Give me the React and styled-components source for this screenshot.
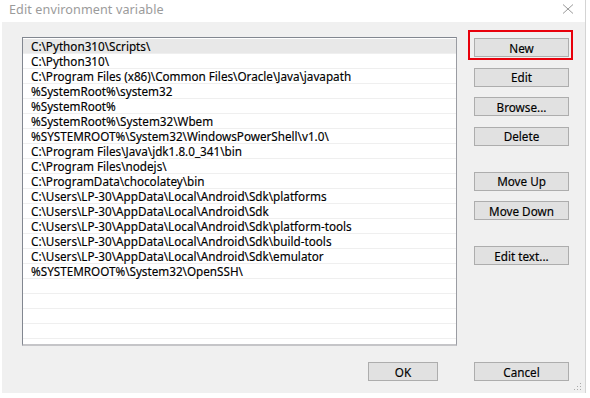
import React from 'react'
import styled, { createGlobalStyle } from 'styled-components'

const paths = [
  'C:\\Python310\\Scripts\\',
  'C:\\Python310\\',
  'C:\\Program Files (x86)\\Common Files\\Oracle\\Java\\javapath',
  '%SystemRoot%\\system32',
  '%SystemRoot%',
  '%SystemRoot%\\System32\\Wbem',
  '%SYSTEMROOT%\\System32\\WindowsPowerShell\\v1.0\\',
  'C:\\Program Files\\Java\\jdk1.8.0_341\\bin',
  'C:\\Program Files\\nodejs\\',
  'C:\\ProgramData\\chocolatey\\bin',
  'C:\\Users\\LP-30\\AppData\\Local\\Android\\Sdk\\platforms',
  'C:\\Users\\LP-30\\AppData\\Local\\Android\\Sdk',
  'C:\\Users\\LP-30\\AppData\\Local\\Android\\Sdk\\platform-tools',
  'C:\\Users\\LP-30\\AppData\\Local\\Android\\Sdk\\build-tools',
  'C:\\Users\\LP-30\\AppData\\Local\\Android\\Sdk\\emulator',
  '%SYSTEMROOT%\\System32\\OpenSSH\\',
]

function App() {
  const rows = [...paths, '', '', '', '', '']
  return (
    <>
      <Global />
      <Window>
        <TitleBar>
          <Title>Edit environment variable</Title>
          <CloseIcon width="12" height="10" viewBox="0 0 12 10">
            <path d="M1 0.5 L11 9.5 M11 0.5 L1 9.5" stroke="#9a9a9a" strokeWidth="1" fill="none" />
          </CloseIcon>
        </TitleBar>
        <Body>
          <MainRow>
            <PathList>
              {rows.map((p, i) => (
                <Row key={i} selected={i === 0}>{p}</Row>
              ))}
            </PathList>
            <SideButtons>
              <Highlight>
                <Button>New</Button>
              </Highlight>
              <Button>Edit</Button>
              <Button>Browse...</Button>
              <Button>Delete</Button>
              <Spacer />
              <Button>Move Up</Button>
              <Button>Move Down</Button>
              <Spacer />
              <Button>Edit text...</Button>
            </SideButtons>
          </MainRow>
          <Footer>
            <Button w="70px">OK</Button>
            <Button>Cancel</Button>
          </Footer>
          <Grip width="8" height="8" viewBox="0 0 8 8">
            <rect x="6" y="0" width="1" height="1" fill="#aaa" />
            <rect x="3" y="3" width="1" height="1" fill="#aaa" />
            <rect x="6" y="3" width="1" height="1" fill="#aaa" />
            <rect x="0" y="6" width="1" height="1" fill="#aaa" />
            <rect x="3" y="6" width="1" height="1" fill="#aaa" />
            <rect x="6" y="6" width="1" height="1" fill="#aaa" />
          </Grip>
        </Body>
      </Window>
    </>
  )
}

export default App

const Global = createGlobalStyle`
  body {
    margin: 0;
    background: #fff;
    font-family: "Noto Sans", "Open Sans", sans-serif;
  }
`

const Window = styled.div`
  width: 583px;
  height: 393px;
  margin-left: 2px;
  display: flex;
  flex-direction: column;
  background: #f0f0f0;
  border-right: 1px solid #d4d4d4;
`

const TitleBar = styled.div`
  height: 22px;
  background: #fff;
  display: flex;
  align-items: center;
  justify-content: space-between;
  padding: 0 10px 0 9px;
  margin-left: -2px;
`

const Title = styled.span`
  font-size: 12.6px;
  color: #9b9b9b;
  letter-spacing: 0.1px;
  margin-top: -3px;
`

const CloseIcon = styled.svg`
  margin-top: -4px;
  margin-right: 1px;
`

const Body = styled.div`
  flex: 1;
  position: relative;
  padding: 15px 0 0 20px;
`

const MainRow = styled.div`
  display: flex;
  gap: 17px;
`

const PathList = styled.div`
  width: 433px;
  height: 305px;
  background: #fff;
  border: 1px solid #828790;
  border-bottom: 2px solid #c5c5c8;
  border-right-color: #9a9ca2;
  overflow: hidden;
  padding-top: 1px;
`

const Row = styled.div`
  height: 14px;
  line-height: 14px;
  border-bottom: 1px solid #efefef;
  padding-left: 8px;
  font-size: 11.7px;
  color: #000;
  -webkit-text-stroke: 0.15px #000;
  white-space: nowrap;
  background: ${p => (p.selected ? '#e8e8e8' : '#fff')};
`

const SideButtons = styled.div`
  display: flex;
  flex-direction: column;
  gap: 10.5px;
  padding-top: 1px;
`

const Spacer = styled.div`
  height: 5px;
`

const Highlight = styled.div`
  position: relative;
  &::before {
    content: '';
    position: absolute;
    left: -6px;
    right: -4px;
    top: -8px;
    bottom: -3px;
    border: 2px solid #e8000b;
  }
`

const Button = styled.div`
  width: ${p => p.w || '95px'};
  height: 19px;
  box-sizing: border-box;
  background: #e1e1e1;
  border: 1px solid #adadad;
  display: flex;
  align-items: center;
  justify-content: center;
  font-size: 11.7px;
  color: #000;
  -webkit-text-stroke: 0.15px #000;
  position: relative;
`

const Footer = styled.div`
  display: flex;
  justify-content: flex-end;
  gap: 36px;
  margin-top: 16px;
  padding-right: 16px;
`

const Grip = styled.svg`
  position: absolute;
  right: 3px;
  bottom: 2px;
`
